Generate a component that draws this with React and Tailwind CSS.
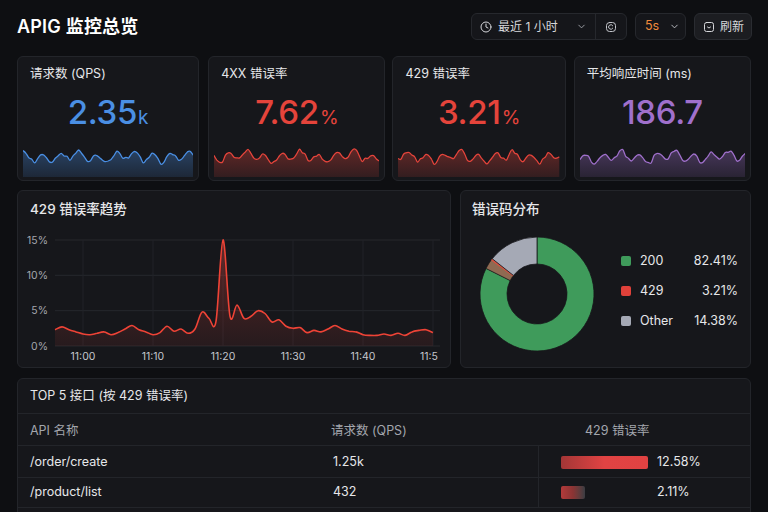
import React from 'react';
import { Clock, ChevronDown } from 'lucide-react';

// Pseudo random, stable between renders
const rand = (i, s) => {
  const x = Math.sin(i * 12.9898 + s * 78.233) * 43758.5453;
  return x - Math.floor(x);
};

// Catmull-Rom points -> cubic bezier path
const smooth = (pts) => {
  let d = `M${pts[0][0].toFixed(1)},${pts[0][1].toFixed(1)}`;
  for (let i = 0; i < pts.length - 1; i++) {
    const p0 = pts[i - 1] || pts[i];
    const p1 = pts[i];
    const p2 = pts[i + 1];
    const p3 = pts[i + 2] || p2;
    const c1x = p1[0] + (p2[0] - p0[0]) / 6;
    const c1y = p1[1] + (p2[1] - p0[1]) / 6;
    const c2x = p2[0] - (p3[0] - p1[0]) / 6;
    const c2y = p2[1] - (p3[1] - p1[1]) / 6;
    d += ` C${c1x.toFixed(1)},${c1y.toFixed(1)} ${c2x.toFixed(1)},${c2y.toFixed(1)} ${p2[0].toFixed(1)},${p2[1].toFixed(1)}`;
  }
  return d;
};

const sparkPoints = (seed, w, n = 58) => {
  const pts = [];
  for (let i = 0; i <= n; i++) {
    const v =
      Math.sin(i * 1.0 + seed) * 0.55 +
      Math.sin(i * 0.33 + seed * 1.7) * 0.3 +
      (rand(i, seed) - 0.5) * 0.5;
    pts.push([(i / n) * w, 11 - v * 7.5]);
  }
  return pts;
};

const Sparkline = ({ id, color, seed }) => {
  const w = 172;
  const h = 31;
  const pts = sparkPoints(seed, w);
  const line = smooth(pts);
  const area = `${line} L${w},${h} L0,${h} Z`;
  return (
    <svg viewBox={`0 0 ${w} ${h}`} preserveAspectRatio="none" className="w-full h-[31px] block">
      <defs>
        <linearGradient id={id} x1="0" y1="0" x2="0" y2="1">
          <stop offset="0" stopColor={color} stopOpacity="0.36" />
          <stop offset="1" stopColor={color} stopOpacity="0.14" />
        </linearGradient>
      </defs>
      <path d={area} fill={`url(#${id})`} />
      <path d={line} fill="none" stroke={color} strokeWidth="1.3" />
    </svg>
  );
};

const stats = [
  { title: '请求数 (QPS)', value: '2.35', unit: 'k', color: '#4a8fe4', text: 'text-[#4a8fe4]', seed: 1.3 },
  { title: '4XX 错误率', value: '7.62', unit: '%', color: '#e5443b', text: 'text-[#e5443b]', seed: 2.6 },
  { title: '429 错误率', value: '3.21', unit: '%', color: '#e5443b', text: 'text-[#e5443b]', seed: 4.1 },
  { title: '平均响应时间 (ms)', value: '186.7', unit: '', color: '#a070cc', text: 'text-[#a070cc]', seed: 5.7 },
];

// 429 rate by minute, 10:56 -> 11:50
const trend = [
  2.3, 2.7, 2.3, 2.0, 1.7, 1.6, 1.8, 2.0, 1.6, 1.9, 2.4, 2.9, 2.3, 2.0, 1.6, 1.9, 2.8, 2.1,
  2.4, 1.8, 2.4, 4.8, 3.9, 3.5, 15.0, 4.2, 5.8, 3.9, 4.2, 5.0, 4.6, 3.4, 3.7, 2.8, 2.5, 2.6,
  1.9, 2.2, 2.0, 2.4, 2.9, 2.4, 2.1, 2.0, 1.6, 1.5, 1.5, 1.7, 1.5, 1.8, 1.5, 2.0, 2.2, 2.3, 1.9,
];

const TrendChart = () => {
  const y0 = 118;
  const perPct = 7.07;
  const x0 = 34;
  const perMin = 7.0;
  const pts = trend.map((v, i) => [x0 + i * perMin, y0 - v * perPct]);
  const line = smooth(pts);
  const area = `${line} L${pts[pts.length - 1][0]},${y0} L${x0},${y0} Z`;
  const yTicks = [
    { label: '15%', y: 12 },
    { label: '10%', y: 47.3 },
    { label: '5%', y: 82.7 },
    { label: '0%', y: 118 },
  ];
  // last label is cut by the plot edge in the source, so only "11:5" shows
  const xTicks = ['11:00', '11:10', '11:20', '11:30', '11:40', '11:5'];
  return (
    <svg width="419" height="138" className="block ml-[3px] mt-[10px]">
      <defs>
        <linearGradient id="trendFill" x1="0" y1="0" x2="0" y2="1">
          <stop offset="0" stopColor="#e5443b" stopOpacity="0.35" />
          <stop offset="1" stopColor="#e5443b" stopOpacity="0.08" />
        </linearGradient>
      </defs>
      {yTicks.map((t) => (
        <g key={t.label}>
          <line x1={x0} x2="419" y1={t.y} y2={t.y} stroke="#26282d" strokeWidth="1" />
          <text x="27" y={t.y + 3.5} textAnchor="end" fontSize="10.5" fill="#a3a6ad">
            {t.label}
          </text>
        </g>
      ))}
      {xTicks.map((t, i) => {
        const x = x0 + (4 + i * 10) * perMin;
        const last = i === xTicks.length - 1;
        return (
          <g key={t}>
            <line x1={x} x2={x} y1="12" y2={y0} stroke="#212328" strokeWidth="1" />
            <text
              x={last ? 417 : x}
              y="132"
              textAnchor={last ? 'end' : 'middle'}
              fontSize="10.5"
              fill="#c4c6cc"
            >
              {t}
            </text>
          </g>
        );
      })}
      <path d={area} fill="url(#trendFill)" />
      <path d={line} fill="none" stroke="#ee4336" strokeWidth="1.6" />
    </svg>
  );
};

const arc = (cx, cy, R, r, a0, a1) => {
  const p = (rad, a) => {
    const t = ((a - 90) * Math.PI) / 180;
    return [cx + rad * Math.cos(t), cy + rad * Math.sin(t)];
  };
  const large = a1 - a0 > 180 ? 1 : 0;
  const [x1, y1] = p(R, a0);
  const [x2, y2] = p(R, a1);
  const [x3, y3] = p(r, a1);
  const [x4, y4] = p(r, a0);
  return `M${x1},${y1} A${R},${R} 0 ${large} 1 ${x2},${y2} L${x3},${y3} A${r},${r} 0 ${large} 0 ${x4},${y4} Z`;
};

const Donut = () => {
  const g = 82.41 * 3.6;
  const rd = g + 3.21 * 3.6;
  return (
    <svg width="120" height="120" className="block shrink-0">
      <path d={arc(60, 60, 57, 30, 0, g)} fill="#3f9b5b" stroke="#16171b" strokeWidth="0.8" />
      <path d={arc(60, 60, 57, 30, g, rd)} fill="#8f6a52" stroke="#16171b" strokeWidth="0.6" />
      <path d={arc(60, 60, 57, 30, rd - 2, rd)} fill="#d9503f" />
      <path d={arc(60, 60, 57, 30, rd, 360)} fill="#a5a9b5" stroke="#16171b" strokeWidth="0.8" />
    </svg>
  );
};

const legend = [
  { label: '200', value: '82.41%', sw: 'bg-[#3f9b5b]' },
  { label: '429', value: '3.21%', sw: 'bg-[#e0413a]' },
  { label: 'Other', value: '14.38%', sw: 'bg-[#a5a9b5]' },
];

const TimerIcon = () => (
  <svg width="12" height="12" viewBox="0 0 24 24" fill="none" stroke="currentColor" strokeWidth="2" strokeLinecap="round" strokeLinejoin="round">
    <rect x="3" y="3" width="18" height="18" rx="6" />
    <path d="M15.5 9.5a4.5 4.5 0 1 0 0 5" />
  </svg>
);

const RefreshIcon = () => (
  <svg width="12" height="12" viewBox="0 0 24 24" fill="none" stroke="currentColor" strokeWidth="2" strokeLinecap="round" strokeLinejoin="round">
    <rect x="3" y="3" width="18" height="18" rx="4" />
    <path d="M9 12l3 2 3-2" />
  </svg>
);

export default function App() {
  return (
    <div className="w-[768px] h-[512px] overflow-hidden bg-[#0e0f12] text-[#e6e7ea] px-[17px] pt-[13px] font-['Inter','Noto_Sans_CJK_SC',sans-serif]">
      {/* header */}
      <div className="flex items-center justify-between h-[27px]">
        <h1 className="text-[18px] font-semibold text-white leading-none tracking-[0.2px]">APIG 监控总览</h1>
        <div className="flex items-center gap-2 h-[27px] mr-[-1px]">
          <div className="flex items-center h-full w-[156px] rounded-md border border-[#26282d] bg-[#15161a]">
            <div className="flex items-center flex-1 pl-[8px] pr-[8px] h-full">
              <Clock size={12} strokeWidth={2} className="text-[#d6d7db]" />
              <span className="ml-[6px] text-[12px] text-[#d6d7db]">最近 1 小时</span>
              <ChevronDown size={11} strokeWidth={2} className="ml-auto text-[#a3a6ad]" />
            </div>
            <div className="flex items-center justify-center w-[31px] h-full border-l border-[#26282d] text-[#c4c6cc]">
              <TimerIcon />
            </div>
          </div>
          <div className="flex items-center h-full w-[51px] rounded-md border border-[#26282d] bg-[#15161a] pl-[9px]">
            <span className="text-[12.5px] text-[#f08a3c]">5s</span>
            <ChevronDown size={11} strokeWidth={2} className="ml-[10px] text-[#c4c6cc]" />
          </div>
          <div className="flex items-center gap-[5px] h-full w-[58px] rounded-md border border-[#2a2c31] bg-[#1c1d21] pl-[8px] text-[#d6d7db]">
            <RefreshIcon />
            <span className="text-[12px]">刷新</span>
          </div>
        </div>
      </div>

      {/* stat cards */}
      <div className="flex mt-[16px]">
        {stats.map((s, i) => (
          <div
            key={s.title}
            className={`h-[125px] rounded-md border border-[#23252a] bg-[#16171b] flex flex-col ${
              ['w-[183px]', 'w-[178px] ml-[9px]', 'w-[174px] ml-[7px]', 'w-[178px] ml-[8px]'][i]
            }`}
          >
            <div className="px-[12px] pt-[9px] text-[12.5px] leading-[16px] text-[#e6e7ea]">{s.title}</div>
            <div className={`mt-[12px] h-[36px] flex items-baseline justify-center ${s.text}`}>
              <span className="text-[33px] leading-[36px] font-medium tracking-[-0.3px]">{s.value}</span>
              {s.unit && <span className="text-[19px] ml-[1px]">{s.unit}</span>}
            </div>
            <div className="mt-auto px-[5px] pb-[3px]">
              <Sparkline id={`sp${i}`} color={s.color} seed={s.seed} />
            </div>
          </div>
        ))}
      </div>

      {/* chart row */}
      <div className="grid grid-cols-[434px_1fr] gap-[9px] mt-[9px]">
        <div className="h-[178px] rounded-md border border-[#23252a] bg-[#16171b]">
          <div className="px-[12px] pt-[9px] text-[13.5px] leading-[18px] font-medium">429 错误率趋势</div>
          <TrendChart />
        </div>
        <div className="h-[178px] rounded-md border border-[#23252a] bg-[#16171b]">
          <div className="px-[11px] pt-[9px] text-[13.5px] leading-[18px] font-medium">错误码分布</div>
          <div className="flex items-center mt-[16px] ml-[16px]">
            <Donut />
            <div className="ml-[24px] w-[117px] flex flex-col gap-[12px] mb-[6px]">
              {legend.map((l) => (
                <div key={l.label} className="flex items-center h-[18px] text-[12.5px] text-[#e6e7ea]">
                  <span className={`w-[10px] h-[10px] rounded-[2px] ${l.sw}`} />
                  <span className="ml-[9px]">{l.label}</span>
                  <span className="ml-auto">{l.value}</span>
                </div>
              ))}
            </div>
          </div>
        </div>
      </div>

      {/* table */}
      <div className="mt-[10px] rounded-md border border-[#23252a] bg-[#16171b] text-[12.5px]">
        <div className="h-[35px] flex items-center px-[12px] border-b border-[#23252a]">TOP 5 接口 (按 429 错误率)</div>
        <div className="grid grid-cols-[313px_207px_1fr] h-[32px] items-center pt-[3px] border-b border-[#23252a] text-[#a3a6ad]">
          <div className="pl-[12px]">API 名称</div>
          <div>请求数 (QPS)</div>
          <div className="pl-[47px]">429 错误率</div>
        </div>
        <div className="grid grid-cols-[313px_207px_1fr] h-[32px] border-b border-[#23252a]">
          <div className="pl-[12px] pt-[2px] flex items-center">/order/create</div>
          <div className="pl-[2px] pt-[2px] flex items-center">1.25k</div>
          <div className="border-l border-[#23252a] flex items-center pl-[22px] pt-[2px]">
            <div className="w-[87px] h-[13px] rounded-[2px] bg-gradient-to-r from-[#a33636] via-[#e14343] to-[#e04242]" />
            <span className="ml-[9px]">12.58%</span>
          </div>
        </div>
        <div className="grid grid-cols-[313px_207px_1fr] h-[30px] border-b border-[#23252a]">
          <div className="pl-[12px] flex items-center">/product/list</div>
          <div className="pl-[2px] flex items-center">432</div>
          <div className="border-l border-[#23252a] flex items-center pl-[22px]">
            <div className="w-[24px] h-[13px] rounded-[2px] bg-gradient-to-r from-[#b33a3a] via-[#8a3434] to-[#3a3c42]" />
            <span className="ml-[72px]">2.11%</span>
          </div>
        </div>
        <div className="h-[30px]" />
      </div>
    </div>
  );
}
